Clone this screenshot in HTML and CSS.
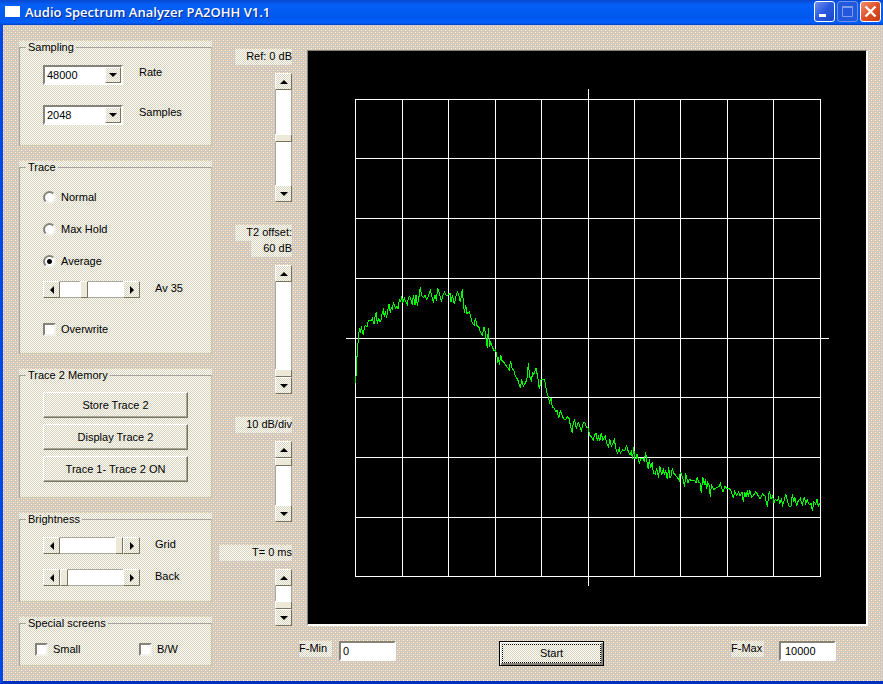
FILE: index.html
```html
<!DOCTYPE html>
<html>
<head>
	<meta charset="utf-8">
	<title>Audio Spectrum Analyzer PA2OHH V1.1</title>
	<link rel="stylesheet" href="styles.css">
</head>
<body>
<div class="window">
	<header class="titlebar">
		<span class="app-icon"></span>
		<h1>Audio Spectrum Analyzer PA2OHH V1.1</h1>
		<button class="win-btn" aria-label="Minimize">
			<svg viewBox="0 0 21 21"><rect x="5" y="13" width="7" height="3" fill="#fff"/></svg>
		</button>
		<button class="win-btn inactive" aria-label="Maximize">
			<svg viewBox="0 0 21 21"><path d="M5.500 6v9.500h10V6" fill="none" stroke="#7d9df0"/><path d="M5 6h11" stroke="#7d9df0" stroke-width="2"/></svg>
		</button>
		<button class="win-btn close" aria-label="Close">
			<svg viewBox="0 0 21 21"><path d="M5.500 5.500l10 10M15.500 5.500l-10 10" stroke="#fff" stroke-width="2.400"/></svg>
		</button>
	</header>

	<main class="client">
		<form class="groups">
			<div class="group">
				<fieldset>
					<legend>Sampling</legend>
					<div class="rows combos">
						<div class="row">
							<span class="combo">
								<select id="rate"><option>48000</option></select>
								<span class="arrow-box"><i class="arrow down"></i></span>
							</span>
							<label for="rate">Rate</label>
						</div>
						<div class="row">
							<span class="combo">
								<select id="samples"><option>2048</option></select>
								<span class="arrow-box"><i class="arrow down"></i></span>
							</span>
							<label for="samples">Samples</label>
						</div>
					</div>
				</fieldset>
			</div>

			<div class="group">
				<fieldset>
					<legend>Trace</legend>
					<div class="rows traces">
						<label class="check"><input type="radio" name="trace">Normal</label>
						<label class="check"><input type="radio" name="trace">Max Hold</label>
						<label class="check"><input type="radio" name="trace" checked>Average</label>
						<div class="row">
							<div class="scroll">
								<button type="button" aria-label="Less"><i class="arrow left"></i></button>
								<input type="range" id="av" value="36">
								<button type="button" aria-label="More"><i class="arrow right"></i></button>
							</div>
							<label for="av">Av 35</label>
						</div>
						<label class="check overwrite"><input type="checkbox">Overwrite</label>
					</div>
				</fieldset>
			</div>

			<div class="group">
				<fieldset>
					<legend>Trace 2 Memory</legend>
					<div class="rows buttons">
						<button type="button" class="btn">Store Trace 2</button>
						<button type="button" class="btn">Display Trace 2</button>
						<button type="button" class="btn">Trace 1- Trace 2 ON</button>
					</div>
				</fieldset>
			</div>

			<div class="group">
				<fieldset>
					<legend>Brightness</legend>
					<div class="rows levels">
						<div class="row">
							<div class="scroll">
								<button type="button" aria-label="Less"><i class="arrow left"></i></button>
								<input type="range" id="grid" value="100">
								<button type="button" aria-label="More"><i class="arrow right"></i></button>
							</div>
							<label for="grid">Grid</label>
						</div>
						<div class="row">
							<div class="scroll">
								<button type="button" aria-label="Less"><i class="arrow left"></i></button>
								<input type="range" id="back" value="0">
								<button type="button" aria-label="More"><i class="arrow right"></i></button>
							</div>
							<label for="back">Back</label>
						</div>
					</div>
				</fieldset>
			</div>

			<div class="group">
				<fieldset>
					<legend>Special screens</legend>
					<div class="screens">
						<label class="check"><input type="checkbox">Small</label>
						<label class="check"><input type="checkbox">B/W</label>
					</div>
				</fieldset>
			</div>
		</form>

		<div class="sliders">
			<div class="slider">
				<label class="caption" for="ref"><span>Ref: 0 dB</span></label>
				<div class="scroll vertical tall">
					<button type="button" aria-label="Up"><i class="arrow up"></i></button>
					<input type="range" id="ref" value="50">
					<button type="button" aria-label="Down"><i class="arrow down"></i></button>
				</div>
			</div>
			<div class="slider">
				<label class="caption" for="offset"><span>T2 offset:</span><span class="short">60 dB</span></label>
				<div class="scroll vertical tall">
					<button type="button" aria-label="Up"><i class="arrow up"></i></button>
					<input type="range" id="offset" value="100">
					<button type="button" aria-label="Down"><i class="arrow down"></i></button>
				</div>
			</div>
			<div class="slider">
				<label class="caption" for="div"><span>10 dB/div</span></label>
				<div class="scroll vertical medium">
					<button type="button" aria-label="Up"><i class="arrow up"></i></button>
					<input type="range" id="div" value="0">
					<button type="button" aria-label="Down"><i class="arrow down"></i></button>
				</div>
			</div>
			<div class="slider">
				<label class="caption" for="time"><span class="wide">T= 0 ms</span></label>
				<div class="scroll vertical small">
					<button type="button" aria-label="Up"><i class="arrow up"></i></button>
					<input type="range" id="time" value="100">
					<button type="button" aria-label="Down"><i class="arrow down"></i></button>
				</div>
			</div>
		</div>

		<section class="screen">
			<div class="display">
				<svg viewBox="0 0 558 573" preserveAspectRatio="none">
					<!-- graticule -->
					<path class="grid" d="M47 48.500H513M47 107.500H513M47 167.500H513M47 227.500H513M38 287.500H521M47 346.500H513M47 406.500H513M47 466.500H513M47 525.500H513
						M47.500 48V526M94.500 48V526M140.500 48V526M187.500 48V526M233.500 48V526M280.500 38V535M326.500 48V526M372.500 48V526M419.500 48V526M465.500 48V526M512.500 48V526"/>
					<!-- trace: low, middle and high part of the band -->
					<polyline class="trace" transform="translate(37 219) scale(.3333)" points="31,320 31,340 33,320 34,280 37,250 38,228 41,200 43,175 46,185 49,172 52,182 55,195 58,172 61,166 66,170 70,152 76,152 80,152 82,140 85,160 88,160 90,140 94,127 97,163 101,143 104,155 107,155 109,145 112,128 115,120 118,140 121,122 124,140 128,130 130,105 133,105 136,130 139,110 142,120 145,97 151,115 156,108 160,118 163,88 167,95 170,78 173,98 178,84 181,93 187,105 190,82 195,80 199,92 202,105 205,75 210,105 213,75 217,107 222,80 226,52 230,78 236,82 240,75 245,88 250,78 256,62 262,85 265,95 270,75 274,92 278,55 284,72 289,95 294,75 299,65 304,78 310,75 316,70 318,95 322,75 328,103 333,78 338,65 342,78 346,97 352,58 355,95 358,128 362,105 366,130 373,125 378,145 382,160 388,165 391,145 396,167 402,172 406,187 412,195 417,172 421,185 424,215 427,235 430,175 434,230 437,218 442,230 447,243 452,238"/>
					<polyline class="trace" transform="translate(172 289) scale(.3333)" points="45,30 50,40 53,68 55,50 58,75 62,45 66,62 74,70 82,82 88,90 91,62 96,83 103,95 106,108 113,118 118,135 121,145 125,118 130,138 137,128 141,115 145,70 149,110 154,122 158,98 162,103 168,85 173,110 178,148 183,120 192,117 196,130 200,155 205,172 209,187 213,173 217,203 222,203 228,215 231,210 236,235 241,212 246,225 251,237 257,240 262,230 267,235 272,260 277,280 280,245 284,240 289,265 295,248 300,260 304,272 310,247 315,248 319,262 325,265 329,285 334,290 340,300 343,285 349,280 352,302 356,290 360,302 364,278 368,300 376,288 380,310 386,322 389,297 394,318 400,308 403,295 407,325 413,340 418,325 421,340 428,330 434,332 440,317 445,335 450,345 454,335 458,357 461,320 464,355 469,355 471,342 478,370 482,355 490,355 493,365 497,335 500,360 505,388 508,358 512,385 517,367 520,400 526,402 530,385 536,415 538,385 540,380"/>
					<polyline class="trace" transform="translate(332 389) scale(.3333)" points="60,80 65,105 70,85 73,105 77,90 82,118 86,82 90,115 94,105 97,85 100,98 106,105 112,112 118,122 121,95 126,108 131,125 134,142 137,100 140,112 144,128 148,118 155,122 165,122 168,130 172,110 176,128 180,128 184,160 188,110 193,135 196,118 200,148 203,128 207,135 211,170 214,135 222,148 230,142 237,140 241,130 245,145 249,155 255,138 260,145 267,145 272,150 275,158 280,175 284,155 290,165 296,155 300,168 306,155 310,187 314,155 318,170 322,150 325,172 329,150 335,172 341,165 348,155 355,168 360,178 367,162 375,168 382,200 388,152 393,178 398,168 402,190 406,178 412,182 416,172 419,192 424,178 428,195 433,180 437,162 443,185 448,200 453,200 457,162 461,185 465,173 470,198 474,185 481,175 487,195 493,172 497,190 502,180 508,195 514,190 517,213 522,185 527,192 531,178 535,198 540,190"/>
				</svg>
			</div>
			<div class="controls">
				<div class="field">
					<label for="fmin">F-Min</label>
					<input type="text" id="fmin" value="0">
				</div>
				<button type="button" class="btn start"><span>Start</span></button>
				<div class="field max">
					<label for="fmax">F-Max</label>
					<input type="text" id="fmax" value="10000">
				</div>
			</div>
		</section>
	</main>
</div>
</body>
</html>
```
FILE: styles.css
```css
* {
	box-sizing: border-box;
}
body {
	margin: 0;
	font: 11px/16px "Liberation Sans", Arial, sans-serif;
	color: #000;
}
button, input, select {
	font: inherit;
	color: inherit;
	margin: 0;
	padding: 0;
	border-radius: 0;
}
.window {
	display: flex;
	flex-direction: column;
	min-height: 100vh;
	border-left: 3px solid #0048e8;
	border-bottom: 3px solid #0030c0;
	background-color: #cec7c0;
	background-image:
		conic-gradient(from 270deg at 1px 1px, #ffffb4 25%, transparent 0),
		conic-gradient(from 270deg at 1px 1px, #ffffb4 25%, transparent 0),
		conic-gradient(from 270deg at 1px 1px, #ffc8c4 25%, transparent 0),
		conic-gradient(from 270deg at 1px 1px, #ffc8c4 25%, transparent 0);
	background-size: 4px 4px;
	background-position: 0 0, 2px 2px, 2px 0, 0 2px;
}

/* title bar */
.titlebar {
	display: flex;
	align-items: center;
	gap: 2px;
	height: 25px;
	margin-left: -3px;
	padding: 0 2px 2px 5px;
	background: linear-gradient(#0848d0, #0560f8 20%, #0058ec 70%, #0060ff 90%, #0040c8);
}
.app-icon {
	width: 15px;
	height: 11px;
	margin-right: 3px;
	background: #fff;
}
h1 {
	flex: 1;
	margin: 0;
	font: 600 13px/20px "Open Sans", sans-serif;
	color: #fff;
	text-shadow: 1px 1px #0a2a90;
}
.win-btn {
	width: 21px;
	height: 21px;
	border: 1px solid #fff;
	border-radius: 3px;
	background: linear-gradient(135deg, #7090f0, #2858e0 50%, #1c48c8);
}
.win-btn svg {
	display: block;
	width: 21px;
	height: 21px;
	margin: -1px;
}
.inactive {
	border-color: #6a90f0;
	background: #2458dc;
}
.close {
	background: linear-gradient(135deg, #f09070, #e05028 50%, #c83c10);
}

.client {
	flex: 1;
	display: flex;
	padding: 16px 15px 0 16px;
}

/* light dithered surface */
.group, .caption span, .field label, .btn, .arrow-box, .scroll button {
	background-image: repeating-conic-gradient(#fffff4 0 25%, #d6d0c2 0 50%);
	background-size: 2px 2px;
}

/* group boxes */
.groups {
	display: flex;
	flex-direction: column;
	gap: 15px;
	width: 193px;
}
fieldset {
	margin: 0;
	padding: 0;
	border: 1px solid #a5a29a;
	border-right-color: #c8c8a8;
	border-bottom-color: #c8c8a8;
}
legend {
	margin-left: 6px;
	padding: 0 2px;
	line-height: 13px;
}
.rows {
	display: flex;
	flex-direction: column;
	padding-left: 23px;
}
.row {
	display: flex;
	gap: 15px;
}
.row label {
	line-height: 14px;
}
.combos {
	gap: 20px;
	padding-top: 11px;
	padding-bottom: 20px;
}
.combos .row {
	gap: 16px;
}
.combo {
	display: flex;
	width: 80px;
	height: 20px;
	border: 2px solid;
	border-color: #85827a #fff #fff #85827a;
	background: #fff;
}
.combo select {
	flex: 1;
	min-width: 0;
	appearance: none;
	border: 0;
	padding-left: 2px;
	background: #fff;
}
.arrow-box, .scroll button {
	display: flex;
	align-items: center;
	justify-content: center;
	width: 17px;
	height: 17px;
	border: 1px solid;
	border-color: #fff #77745f #77745f #fff;
}
.combo .arrow-box {
	width: 16px;
	height: 16px;
}
.traces {
	padding-top: 15px;
	padding-bottom: 16px;
	gap: 16px;
}
.traces .row {
	margin-top: -4px;
}
.overwrite {
	margin-top: 7px;
}
.check {
	display: flex;
	align-items: center;
	gap: 5px;
}
.check input {
	appearance: none;
	width: 13px;
	height: 13px;
	border: 2px solid;
	border-color: #85827a #f4f1ea #f4f1ea #85827a;
	background: #fff;
}
.check input[type=radio] {
	border-radius: 50%;
}
.check input[type=radio]:checked {
	background: radial-gradient(circle, #000 2px, #fff 3px);
}
.buttons {
	gap: 6px;
	padding: 10px 23px 15px;
}
.btn {
	height: 26px;
	border: 1px solid;
	border-color: #fff #77745f #77745f #fff;
	box-shadow: inset -1px -1px #a8a594;
}
.levels {
	gap: 15px;
	padding-top: 11px;
	padding-bottom: 15px;
}
.screens {
	display: grid;
	grid-template-columns: 104px auto;
	padding: 11px 0 8px 15px;
}

/* scroll bars */
.scroll {
	display: flex;
	width: 97px;
	height: 17px;
}
.scroll input {
	flex: 1;
	min-width: 0;
	min-height: 0;
	appearance: none;
	background: #fff;
	border: 1px solid #aaa89c;
	border-width: 1px 0;
}
.scroll input::-webkit-slider-thumb {
	appearance: none;
	width: 8px;
	height: 17px;
	border: 1px solid;
	border-color: #fff #77745f #77745f #fff;
	background: #ece9d8;
}
.vertical {
	flex-direction: column;
	width: 17px;
}
.vertical input {
	width: 17px;
	writing-mode: vertical-lr;
	border-width: 0 1px;
}
.vertical input::-webkit-slider-thumb {
	width: 17px;
	height: 8px;
}
.tall {
	height: 129px;
}
.medium {
	height: 81px;
}
.small {
	height: 57px;
}
.arrow {
	border: 4px solid transparent;
}
.down {
	border-top-color: #000;
	border-bottom: 0;
}
.up {
	border-bottom-color: #000;
	border-top: 0;
}
.left {
	border-right-color: #000;
	border-left: 0;
}
.right {
	border-left-color: #000;
	border-right: 0;
}

.sliders {
	display: flex;
	flex-direction: column;
	gap: 23px;
	width: 80px;
	padding-top: 8px;
}
.slider {
	display: flex;
	flex-direction: column;
	align-items: flex-end;
	gap: 8px;
}
.caption {
	display: flex;
	flex-direction: column;
	align-items: flex-end;
	text-align: right;
	white-space: nowrap;
}
.caption span {
	width: 57px;
	padding-bottom: 2px;
	line-height: 14px;
}
.caption .short {
	width: 41px;
}
.caption .wide {
	width: 73px;
}

/* spectrum display */
.screen {
	flex: 1;
	display: flex;
	flex-direction: column;
	padding: 9px 0 15px 15px;
}
.display {
	flex: 1;
	display: flex;
	border: 1px solid #85827a;
	border-right: 2px solid #fff;
	border-bottom: 2px solid #fff;
	background: #000;
}
.display svg {
	flex: 1;
	width: 100%;
	min-width: 0;
}
.grid, .trace {
	fill: none;
	stroke: #fff;
	vector-effect: non-scaling-stroke;
	shape-rendering: crispEdges;
}
.trace {
	stroke: #0f0;
}
.controls {
	display: flex;
	justify-content: space-between;
	align-items: flex-start;
	padding: 15px 32px 0 0;
	margin-left: -8px;
}
.field {
	display: flex;
	gap: 7px;
}
.field label {
	width: 33px;
	line-height: 14px;
	padding-bottom: 2px;
	align-self: flex-start;
}
.field.max {
	gap: 15px;
}
.field input {
	width: 57px;
	height: 20px;
	padding: 0 2px;
	border: 2px solid;
	border-color: #85827a #fff #fff #85827a;
	background: #fff;
}
.field.max input {
	padding-left: 4px;
}
.start {
	width: 105px;
	height: 25px;
	margin-right: 24px;
	padding: 2px;
	border: 1px solid #000;
	box-shadow: inset 1px 1px #fff, inset -2px -2px #85827a;
}
.start span {
	display: block;
	height: 19px;
	line-height: 17px;
	border: 1px dotted #000;
}
```
